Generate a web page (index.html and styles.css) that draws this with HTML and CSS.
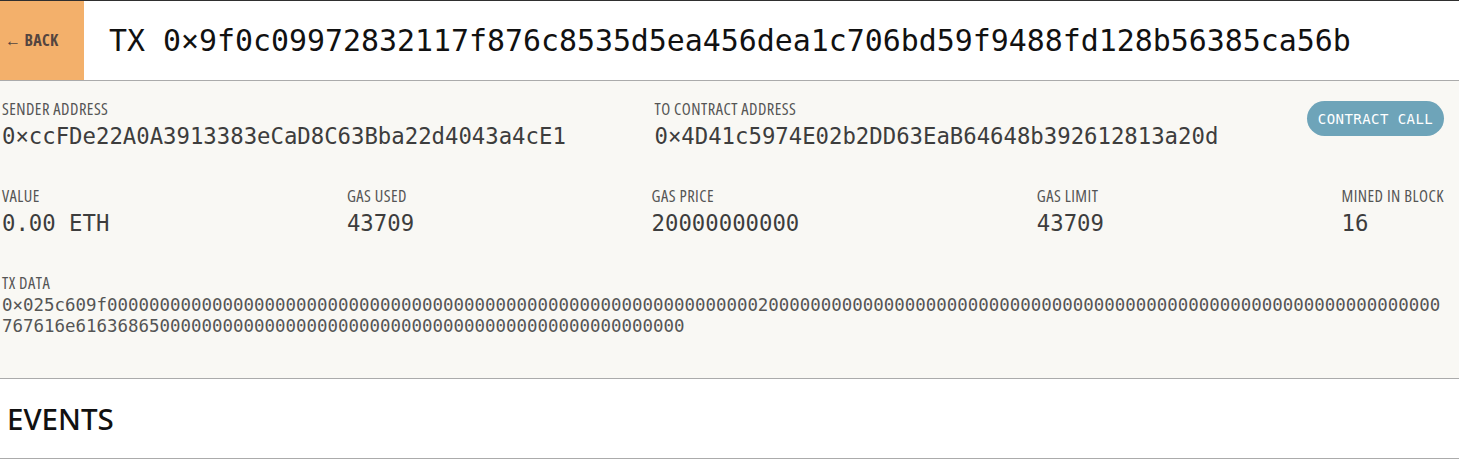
FILE: index.html
```html
<!DOCTYPE html>
<html>
<head>
<meta charset="utf-8">
<link rel="stylesheet" href="styles.css">
</head>
<body>
<header class="topbar">
  <button class="back">&larr; BACK</button>
  <h1 class="title">TX 0×9f0c09972832117f876c8535d5ea456dea1c706bd59f9488fd128b56385ca56b</h1>
</header>
<section class="details">
  <div class="row">
    <div class="field">
      <div class="label">SENDER ADDRESS</div>
      <div class="value">0×ccFDe22A0A3913383eCaD8C63Bba22d4043a4cE1</div>
    </div>
    <div class="field">
      <div class="label">TO CONTRACT ADDRESS</div>
      <div class="value">0×4D41c5974E02b2DD63EaB64648b392612813a20d</div>
    </div>
    <div class="badge">CONTRACT CALL</div>
  </div>
  <div class="row row-gap">
    <div class="field">
      <div class="label">VALUE</div>
      <div class="value">0.00 ETH</div>
    </div>
    <div class="field">
      <div class="label">GAS USED</div>
      <div class="value">43709</div>
    </div>
    <div class="field">
      <div class="label">GAS PRICE</div>
      <div class="value">20000000000</div>
    </div>
    <div class="field">
      <div class="label">GAS LIMIT</div>
      <div class="value">43709</div>
    </div>
    <div class="field">
      <div class="label">MINED IN BLOCK</div>
      <div class="value">16</div>
    </div>
  </div>
  <div class="txdata row-gap">
    <div class="label">TX DATA</div>
    <div class="data">0×025c609f0000000000000000000000000000000000000000000000000000000000000020000000000000000000000000000000000000000000000000000000000000000767616e6163686500000000000000000000000000000000000000000000000000</div>
  </div>
</section>
<section class="events">
  <h2 class="events-title">EVENTS</h2>
</section>
</body>
</html>
```
FILE: styles.css
```css
* { box-sizing: border-box; }
html, body { margin: 0; padding: 0; background: #ffffff; }
body { width: 1459px; }

.topbar {
  display: flex;
  align-items: center;
  height: 81px;
  border-top: 1px solid #2f2f2f;
  border-bottom: 1px solid #ababab;
  background: #ffffff;
}
.back {
  align-self: stretch;
  width: 84px;
  border: none;
  margin: 0;
  padding: 0 0 2px 5px;
  background: #f3b06b;
  color: #54453f;
  font-family: "Open Sans", sans-serif;
  font-stretch: 75%;
  font-weight: 700;
  font-size: 16px;
  letter-spacing: 0.3px;
  text-align: left;
}
.title {
  margin: 0 0 0 25px;
  font-family: "DejaVu Sans Mono", monospace;
  font-weight: normal;
  font-size: 29.9px;
  color: #111111;
  letter-spacing: 0;
}

.details {
  background: #f9f8f4;
  padding: 19px 15px 41px 2px;
  border-bottom: 1px solid #ababab;
}
.row {
  display: flex;
  justify-content: space-between;
  align-items: flex-start;
}
.row-gap { margin-top: 36px; }
.label {
  font-family: "Open Sans", sans-serif;
  font-stretch: 75%;
  font-weight: 500;
  font-size: 16.5px;
  letter-spacing: 0.45px;
  line-height: 18px;
  color: #555555;
}
.value {
  margin-top: 3px;
  font-family: "DejaVu Sans Mono", monospace;
  font-size: 22.3px;
  line-height: 30px;
  color: #3d3d3d;
  white-space: nowrap;
}
.badge {
  margin-top: 1px;
  height: 35px;
  width: 137px;
  border-radius: 18px;
  background: #6ea4b9;
  color: #ffffff;
  font-family: "DejaVu Sans Mono", monospace;
  font-size: 14px;
  letter-spacing: 0.45px;
  display: flex;
  align-items: center;
  justify-content: center;
}
.data {
  margin-top: 2.5px;
  width: 1445px;
  font-family: "DejaVu Sans Mono", monospace;
  font-size: 17.44px;
  line-height: 21px;
  color: #555555;
  word-break: break-all;
}

.events {
  height: 80px;
  border-bottom: 1px solid #ababab;
  display: flex;
  align-items: center;
  padding-left: 7px;
}
.events-title {
  margin: 0;
  font-family: "Noto Sans", sans-serif;
  font-stretch: 75%;
  font-weight: 500;
  font-size: 29.5px;
  color: #111111;
}
```
